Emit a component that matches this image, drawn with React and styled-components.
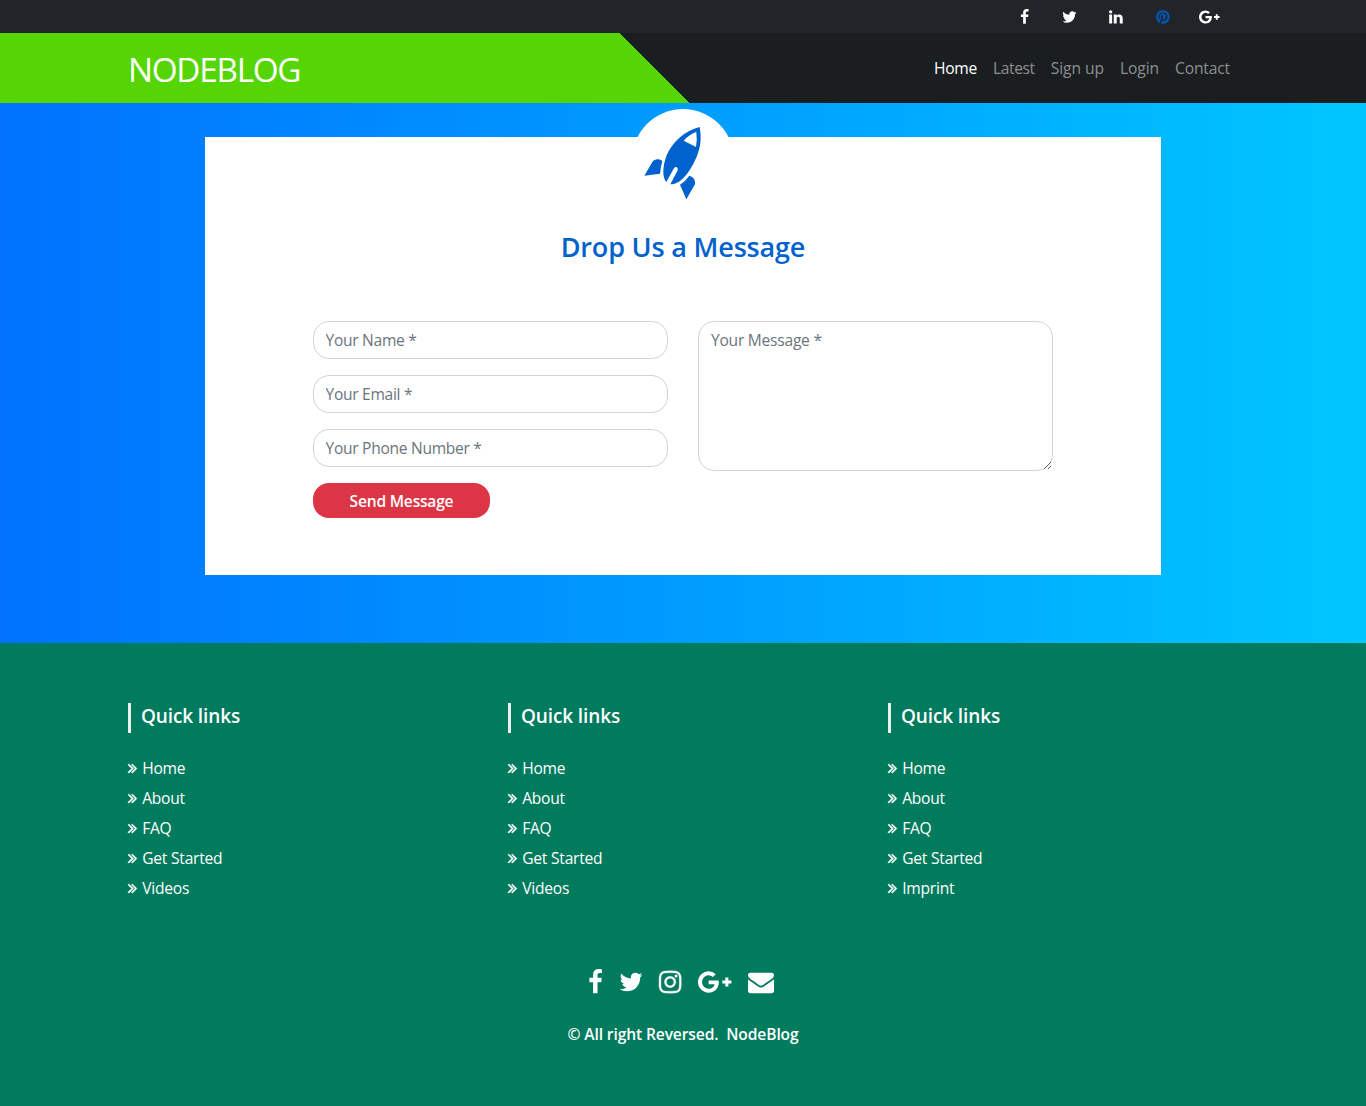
import React from "react";
import styled, { createGlobalStyle } from "styled-components";

const GlobalStyle = createGlobalStyle`
  *, *::before, *::after { box-sizing: border-box; }
  body {
    margin: 0;
    background: #007b5e;
    color: #fff;
    font-family: "Open Sans", "Noto Sans", sans-serif;
    font-size: 15.6px;
    line-height: 24px;
    letter-spacing: -0.22px;
  }
  a { color: inherit; text-decoration: none; }
  ul { list-style: none; margin: 0; padding: 0; }
`;

const GLYPHS = {
  facebook: {
    box: [384, 1024],
    d: "M1343 12v264h-157q-86 0-116 36t-30 108v189h293l-39 296h-254v759h-306v-759h-255v-296h255v-218q0-186 104-288.5t277-102.5q147 0 228 12z",
  },
  twitter: {
    box: [64, 1664],
    d: "M1684 408q-67 98-162 167 1 14 1 42 0 130-38 259.5t-115.5 248.5-184.5 210.5-258 146-323 54.5q-271 0-496-145 35 4 78 4 225 0 401-138-105-2-188-64.5t-114-159.5q33 5 61 5 43 0 85-11-112-23-185.5-111.5t-73.5-205.5v-4q68 38 146 41-66-44-105-115t-39-154q0-88 44-163 121 149 294.5 238.5t371.5 99.5q-8-38-8-74 0-134 94.5-228.5t228.5-94.5q140 0 236 102 109-21 205-78-37 115-142 178 93-10 186-50z",
  },
  linkedin: {
    box: [128, 1536],
    d: "M477 625v991h-330v-991h330zm21-306q1 73-50.5 122t-135.5 49h-2q-82 0-132-49t-50-122q0-74 51.5-122.5t134.5-48.5 133 48.5 51 122.5zm1166 729v568h-329v-530q0-105-40.5-164.5t-126.5-59.5q-63 0-105.5 34.5t-63.5 85.5q-11 30-11 81v553h-329q2-399 2-647t-1-296l-1-48h329v144h-2q20-32 41-56t56.5-52 87-43.5 114.5-15.5q171 0 275 113.5t104 332.5z",
  },
  pinterest: {
    box: [128, 1536],
    d: "M1664 896q0 209-103 385.5t-279.5 279.5-385.5 103q-111 0-218-32 59-93 78-164 9-34 54-211 20 39 73 67.5t114 28.5q121 0 216-68.5t147-188.5 52-270q0-114-59.5-214t-172.5-163-255-63q-105 0-196 29t-154.5 77-109 110.5-67 129.5-21.5 134q0 104 40 183t117 111q30 12 38-20 2-7 8-31t8-30q6-23-11-43-51-61-51-151 0-151 104.5-259.5t273.5-108.5q151 0 235.5 82t84.5 213q0 170-68.5 289t-175.5 119q-61 0-98-43.5t-23-104.5q8-35 26.5-93.5t30-103 11.5-75.5q0-50-27-83t-77-33q-62 0-105 57t-43 142q0 73 25 122l-99 418q-17 70-13 177-206-91-333-281t-127-423q0-209 103-385.5t279.5-279.5 385.5-103 385.5 103 279.5 279.5 103 385.5z",
  },
  googlePlus: {
    box: [0, 2304],
    flip: true,
    d: "M1437 623q0 -208 -87 -370.5t-248 -254t-369 -91.5q-149 0 -285 58t-234 156t-156 234t-58 285t58 285t156 234t234 156t285 58q286 0 491 -192l-199 -191q-117 113 -292 113q-123 0 -227.5 -62t-165.5 -168.5t-61 -232.5t61 -232.5t165.5 -168.5t227.5 -62q83 0 152.5 23t114.5 57.5t78.5 78.5t49 83t21.5 74h-416v252h692q12 -63 12 -122zM2304 745v-210h-209v-209h-210v209h-209v210h209v209h210v-209h209z",
  },
  instagram: {
    box: [128, 1536],
    stroke: 24,
    d: "M1152 896q0-106-75-181t-181-75-181 75-75 181 75 181 181 75 181-75 75-181zm138 0q0 164-115 279t-279 115-279-115-115-279 115-279 279-115 279 115 115 279zm108-410q0 38-27 65t-65 27-65-27-27-65 27-65 65-27 65 27 27 65zm-502-220q-7 0-76.5-.5t-105.5 0-96.5 3-103 10-71.5 18.5q-50 20-88 58t-58 88q-11 29-18.5 71.5t-10 103-3 96.5 0 105.5.5 76.5-.5 76.5 0 105.5 3 96.5 10 103 18.5 71.5q20 50 58 88t88 58q29 11 71.5 18.5t103 10 96.5 3 105.5 0 76.5-.5 76.5.5 105.5 0 96.5-3 103-10 71.5-18.5q50-20 88-58t58-88q11-29 18.5-71.5t10-103 3-96.5 0-105.5-.5-76.5.5-76.5 0-105.5-3-96.5-10-103-18.5-71.5q-20-50-58-88t-88-58q-29-11-71.5-18.5t-103-10-96.5-3-105.5 0-76.5.5zm768 630q0 229-5 317-10 208-124 322t-322 124q-88 5-317 5t-317-5q-208-10-322-124t-124-322q-5-88-5-317t5-317q10-208 124-322t322-124q88-5 317-5t317 5q208 10 322 124t124 322q5 88 5 317z",
  },
  envelope: {
    box: [0, 1792],
    d: "M1792 710v794q0 66-47 113t-113 47h-1472q-66 0-113-47t-47-113v-794q44 49 101 87 362 246 497 345 57 42 92.5 65.5t94.5 48 110 24.5h2q51 0 110-24.5t94.5-48 92.5-65.5q170-123 498-345 57-39 100-87zm0-294q0 79-49 151t-122 123q-376 261-468 325-10 7-42.5 31t-54 38.5-52 32.5-57.5 27-50 9h-2q-23 0-50-9t-57.5-27-52-32.5-54-38.5-42.5-31q-91-64-262-182.5t-205-142.5q-62-42-117-115.5t-55-136.5q0-78 41.5-130t118.5-52h1472q65 0 112.5 47t47.5 113z",
  },
  angles: {
    box: [384, 1024],
    stroke: 70,
    d: "M979 960q0 13-10 23l-466 466q-10 10-23 10t-23-10l-50-50q-10-10-10-23t10-23l393-393-393-393q-10-10-10-23t10-23l50-50q10-10 23-10t23 10l466 466q10 10 10 23zm384 0q0 13-10 23l-466 466q-10 10-23 10t-23-10l-50-50q-10-10-10-23t10-23l393-393-393-393q-10-10-10-23t10-23l50-50q10-10 23-10t23 10l466 466q10 10 10 23z",
  },
};

const Svg = styled.svg`
  display: block;
  flex: none;
  fill: currentColor;
`;

function Icon({ name, size }) {
  const { box, d, flip, stroke } = GLYPHS[name];
  return (
    <Svg
      width={(box[1] / 1792) * size}
      height={size}
      viewBox={`${box[0]} 0 ${box[1]} 1792`}
      overflow="visible"
    >
      <path
        d={d}
        stroke={stroke ? "currentColor" : "none"}
        strokeWidth={stroke}
        transform={flip ? "translate(0 1536) scale(1 -1)" : undefined}
      />
    </Svg>
  );
}

const TopBar = styled.div`
  height: 33px;
  padding-right: 146.2px;
  display: flex;
  align-items: center;
  justify-content: flex-end;
  gap: 32.6px;
  background: #212529;
`;

const SocialLink = styled.a`
  display: flex;
  margin: 1px ${(p) => p.$trim || 0}px 0 0;
  color: ${(p) => (p.$active ? "#0056b3" : "#fff")};
`;

const NavBar = styled.nav`
  height: 70px;
  padding: 0 136px 0 128px;
  display: flex;
  align-items: center;
  justify-content: space-between;
  background: linear-gradient(45deg, #55d604 48%, #1b1e20 48%);
`;

const Brand = styled.a`
  font-size: 33.3px;
  line-height: 50px;
  letter-spacing: -1.3px;
  padding-top: 2px;
`;

const NavLinks = styled.ul`
  display: flex;
  gap: 16px;
  margin-top: -1px;
`;

const NavLink = styled.a`
  letter-spacing: ${(p) => p.$track}px;
  color: ${(p) => (p.$active ? "#fff" : "#8d8e90")};
`;

const Hero = styled.main`
  height: 540px;
  padding-top: 34px;
  background: linear-gradient(to right, #0072ff, #00c6ff);
`;

const Card = styled.section`
  width: 956px;
  height: 438px;
  margin: 0 auto;
  display: flex;
  flex-direction: column;
  align-items: center;
  background: #fff;
`;

const Badge = styled.div`
  width: 102px;
  height: 102px;
  margin-top: -28px;
  flex: none;
  display: flex;
  justify-content: center;
  border-radius: 50%;
  background: #fff;
  color: #0062cc;
`;

const Rocket = styled.svg`
  width: 63px;
  height: 80px;
  margin: 14px 19px 0 0;
  fill: currentColor;
`;

const Title = styled.h3`
  margin: 19px 0 0;
  font-size: 27px;
  line-height: 34px;
  font-weight: 600;
  letter-spacing: -0.18px;
  color: #0062cc;
`;

const Form = styled.form`
  width: 740px;
  margin-top: 57px;
  display: grid;
  grid-template-columns: 355px 355px;
  gap: 30px;
  align-items: start;
`;

const Fields = styled.div`
  display: flex;
  flex-direction: column;
  align-items: flex-start;
  gap: 16px;
`;

const Input = styled.input`
  width: 100%;
  height: 38px;
  padding: 6px 11.5px;
  border: 1px solid #ced4da;
  border-radius: 16px;
  background: #fff;
  font: inherit;
  letter-spacing: -0.3px;
  outline: none;
  &::placeholder { color: #6c757d; opacity: 1; }
`;

const TextArea = styled(Input).attrs({ as: "textarea" })`
  height: 150px;
  padding-left: 12px;
  letter-spacing: -0.25px;
  display: block;
  resize: vertical;
`;

const Submit = styled.button`
  width: 177px;
  height: 35px;
  padding: 1px 0 0;
  border: 0;
  border-radius: 16px;
  background: #dc3545;
  color: #fff;
  font: inherit;
  font-weight: 650;
  letter-spacing: -0.22px;
`;

const Footer = styled.footer`
  height: 463px;
  padding: 60px 128px 0;
  background: #007b5e;
`;

const Columns = styled.div`
  display: grid;
  grid-template-columns: repeat(3, 350px);
  gap: 30px;
`;

const ColumnTitle = styled.h5`
  height: 30px;
  margin: 0 0 20px;
  padding-left: 10px;
  border-left: 3px solid #eee;
  font-size: 19px;
  line-height: 27px;
  font-weight: 650;
  letter-spacing: -0.12px;
`;

const LinkRow = styled.li`
  height: 30px;
  display: flex;
  align-items: center;
  gap: 5px;
`;

const FooterSocial = styled.div`
  margin-top: 66px;
  display: flex;
  justify-content: center;
  gap: 16.4px;
  padding-right: 4.5px;
`;

const Copyright = styled.p`
  margin: 27px 0 0;
  text-align: center;
  font-weight: 650;
  letter-spacing: -0.12px;
  white-space: pre;
`;

const topSocial = [
  { name: "facebook", trim: 1.2 },
  { name: "twitter", trim: -0.6 },
  { name: "linkedin", trim: 0.4 },
  { name: "pinterest", trim: -3 },
  { name: "googlePlus" },
];
const footerSocial = ["facebook", "twitter", "instagram", "googlePlus", "envelope"];
const navItems = [
  { label: "Home", track: -0.25 },
  { label: "Latest", track: -0.4 },
  { label: "Sign up", track: -0.05 },
  { label: "Login", track: -0.1 },
  { label: "Contact", track: -0.15 },
];
const columns = ["Videos", "Videos", "Imprint"].map((last) => [
  "Home", "About", "FAQ", "Get Started", last,
]);

export default function App() {
  return (
    <>
      <GlobalStyle />
      <TopBar>
        {topSocial.map(({ name, trim }) => (
          <SocialLink key={name} href="#" $trim={trim} $active={name === "pinterest"}>
            <Icon name={name} size={16} />
          </SocialLink>
        ))}
      </TopBar>
      <NavBar>
        <Brand href="#">NODEBLOG</Brand>
        <NavLinks>
          {navItems.map(({ label, track }) => (
            <li key={label}>
              <NavLink href="#" $track={track} $active={label === "Home"}>{label}</NavLink>
            </li>
          ))}
        </NavLinks>
      </NavBar>
      <Hero>
        <Card>
          <Badge>
            <Rocket viewBox="126 309 189 240">
              <path
                fillRule="evenodd"
                d="M299 321C304 352 304 376 290 410C272 452 246 492 211 493L232 453C237 443 227 436 221 446L199 486C186 471 188 440 199 408C217 365 255 332 299 321ZM251 362L288 381Q292 360 289 336Q269 342 251 362Z"
              />
              <path d="M133 467L157 426C163 416 178 415 187 423Q182 441 180 461Z" />
              <path d="M240 494L259 538L285 493C287 480 280 470 268 467Q258 482 240 494Z" />
            </Rocket>
          </Badge>
          <Title>Drop Us a Message</Title>
          <Form>
            <Fields>
              <Input placeholder="Your Name *" />
              <Input placeholder="Your Email *" />
              <Input placeholder="Your Phone Number *" />
              <Submit type="button">Send Message</Submit>
            </Fields>
            <TextArea placeholder="Your Message *" />
          </Form>
        </Card>
      </Hero>
      <Footer>
        <Columns>
          {columns.map((links, i) => (
            <div key={i}>
              <ColumnTitle>Quick links</ColumnTitle>
              <ul>
                {links.map((l) => (
                  <LinkRow key={l}>
                    <Icon name="angles" size={16} />
                    <a href="#">{l}</a>
                  </LinkRow>
                ))}
              </ul>
            </div>
          ))}
        </Columns>
        <FooterSocial>
          {footerSocial.map((n) => (
            <a key={n} href="#"><Icon name={n} size={26} /></a>
          ))}
        </FooterSocial>
        <Copyright>{"© All right Reversed.  NodeBlog"}</Copyright>
      </Footer>
    </>
  );
}
